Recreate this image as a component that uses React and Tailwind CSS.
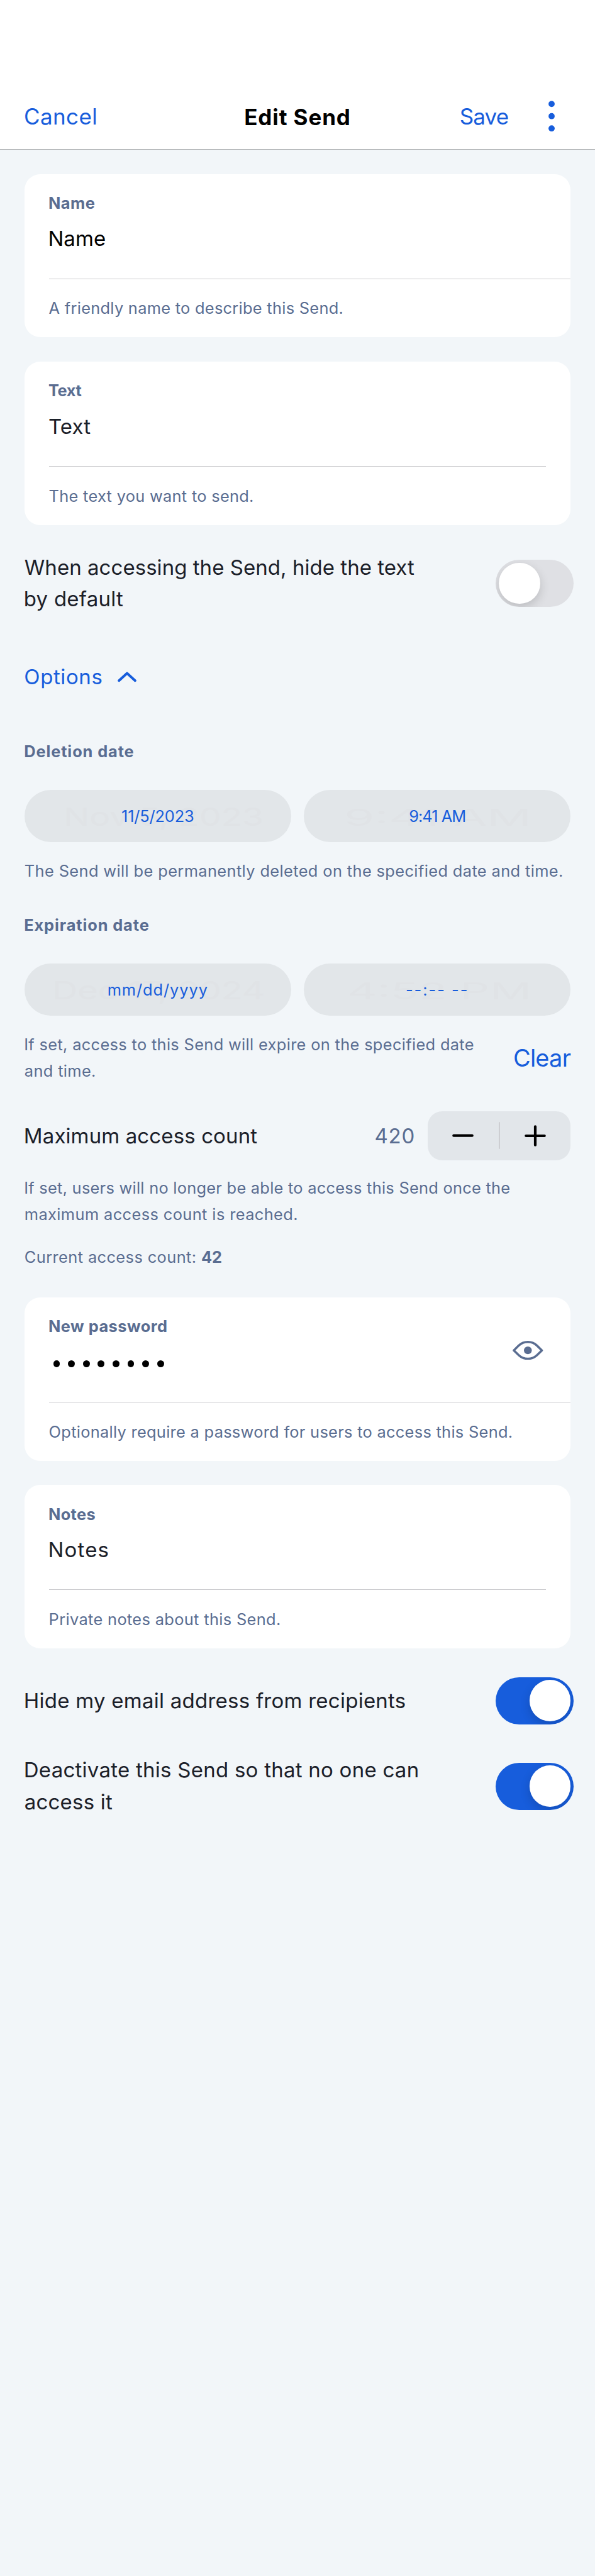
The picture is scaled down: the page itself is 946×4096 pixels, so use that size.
import React from "react";

const LABEL = "block whitespace-nowrap font-bold text-[25.4px] leading-[32px] text-[#5a6d91]";
const HELP = "block whitespace-nowrap text-[25.4px] text-[#5a6d91]";
const BODY = "block whitespace-nowrap text-[33px] text-[#1b2029]";

function Card({ label, labelClass, children, help, helpClass, inset, icon }) {
  return (
    <section className="flex h-[259.6px] w-[868.4px] flex-col rounded-[25px] bg-white pl-[38.8px] pt-[30.2px]">
      <div className="flex h-[135.8px] items-start justify-between pr-[43.5px]">
        <div className="-ml-[0.6px]">
          <span className={`${LABEL} ${labelClass}`}>{label}</span>
          <div className="mt-[18.4px] h-[44px]">{children}</div>
        </div>
        {icon}
      </div>
      <div className={`h-px shrink-0 bg-[#c9c9cc] ${inset ? "mr-[38.8px]" : ""}`} />
      <span className={`mt-[30.4px] leading-[32px] ${HELP} ${helpClass}`}>{help}</span>
    </section>
  );
}

function Toggle({ on }) {
  return (
    <div
      className={`-mr-[4.8px] flex h-[75px] w-[123.7px] shrink-0 items-center overflow-hidden rounded-full px-[4.9px] ${
        on ? "justify-end bg-[#175ddc]" : "justify-start bg-[#dfe0e4]"
      }`}
    >
      <div className="size-[65.4px] rounded-full bg-white shadow-[0_6px_16px_rgba(0,0,0,0.16)]" />
    </div>
  );
}

function Pill({ text, textClass, ghost, x, width, size }) {
  return (
    <div className="relative flex h-[83.2px] w-[424px] items-center justify-center rounded-[41.6px] bg-[#e2e6e9]">
      <svg className="absolute inset-0" width="424" height="83" aria-hidden="true">
        <text
          x={x}
          y="56.5"
          textLength={width}
          lengthAdjust="spacingAndGlyphs"
          fontSize={size}
          fill="#e0e3e6"
        >
          {ghost}
        </text>
      </svg>
      <span className={`relative whitespace-nowrap text-[25.4px] leading-[32px] text-[#175ddc] ${textClass}`}>
        {text}
      </span>
    </div>
  );
}

const Eye = () => (
  <svg className="mt-[38.3px] shrink-0" width="48.5" height="30.3" viewBox="0 0 60 37.5" fill="none">
    <path
      d="M2.4 18.75 L12 9.4 C17.5 4.2 23.5 2.2 30 2.2 C36.5 2.2 42.5 4.2 48 9.4 L57.6 18.75 L48 28.1 C42.5 33.3 36.5 35.3 30 35.3 C23.5 35.3 17.5 33.3 12 28.1 Z"
      stroke="#5a6d91"
      strokeWidth="4.4"
      strokeLinejoin="round"
    />
    <circle cx="30" cy="18.75" r="7.7" fill="#5a6d91" />
  </svg>
);

export default function App() {
  return (
    <div className="flex min-h-[4096px] w-[946px] flex-col bg-[#f2f6f9] font-['Inter',sans-serif]">
      <header className="grid h-[238px] grid-cols-[1fr_auto_1fr] items-start border-b border-[#a9acae] bg-white pt-[162.6px] text-[35px] leading-[44px]">
        <span className="pl-[38px] tracking-[0.4px] text-[#175ddc]">Cancel</span>
        <span className="mt-[1.6px] font-bold tracking-[0.9px] text-black">Edit Send</span>
        <div className="flex justify-end gap-[64px] pr-[63.7px] text-[#175ddc]">
          <span className="tracking-[-0.83px]">Save</span>
          <svg className="-mt-[3px]" width="10" height="50" viewBox="0 0 10 50" fill="#175ddc">
            <circle cx="5" cy="5.3" r="4.9" />
            <circle cx="5" cy="24.7" r="4.9" />
            <circle cx="5" cy="44.2" r="4.9" />
          </svg>
        </div>
      </header>

      <main className="flex flex-col px-[38.8px] pt-[38.6px]">
        <Card
          label="Name"
          labelClass="tracking-[0.49px]"
          help="A friendly name to describe this Send."
          helpClass="tracking-[0.28px]"
        >
          <span className="-ml-[0.6px] block text-[33px] leading-[44px] tracking-[0.09px] text-black">Name</span>
        </Card>

        <div className="mt-[39px]">
          <Card
            label="Text"
            labelClass="tracking-[-0.38px]"
            help="The text you want to send."
            helpClass="tracking-[0.29px]"
            inset
          >
            <span className={`${BODY} leading-[44px] tracking-[0.15px]`}>Text</span>
          </Card>
        </div>

        <div className="mt-[42px] flex items-center justify-between">
          <div className={`${BODY} leading-[50.6px]`}>
            <span className="block tracking-[0.04px]">When accessing the Send, hide the text</span>
            <span className="-ml-[1px] block tracking-[0.23px]">by default</span>
          </div>
          <Toggle />
        </div>

        <div className="mt-[73.2px] flex h-[50px] items-center">
          <span className="-ml-[0.5px] text-[33px] leading-[50px] tracking-[0.6px] text-[#175ddc]">Options</span>
          <svg className="ml-[24px]" width="30" height="17" viewBox="0 0 30 17" fill="none">
            <path d="M2.2 14.2 L15 2.6 L27.8 14.2" stroke="#175ddc" strokeWidth="4" strokeLinecap="round" strokeLinejoin="round" />
          </svg>
        </div>

        <span className={`mt-[78.1px] -ml-[0.6px] ${LABEL} tracking-[0.88px]`}>Deletion date</span>
        <div className="mt-[45px] flex justify-between">
          <Pill text="11/5/2023" textClass="tracking-[-0.18px]" ghost="Nov 5, 2023" x={62} width={318} size={40} />
          <Pill text="9:41 AM" textClass="tracking-[-0.98px]" ghost="9:41 AM" x={64} width={298} size={37} />
        </div>
        <span className={`mt-[30px] leading-[32px] ${HELP} tracking-[0.38px]`}>
          The Send will be permanently deleted on the specified date and time.
        </span>

        <span className={`mt-[53.7px] -ml-[0.6px] ${LABEL} tracking-[0.88px]`}>Expiration date</span>
        <div className="mt-[45px] flex justify-between">
          <Pill text="mm/dd/yyyy" textClass="tracking-[0.93px]" ghost="Dec 17, 2024" x={44} width={338} size={40} />
          <Pill text="--:-- --" textClass="tracking-[2px]" ghost="4:52 PM" x={69} width={293} size={37} />
        </div>
        <div className="mt-[24.8px] flex items-center justify-between">
          <div className={`${HELP} leading-[42.2px]`}>
            <span className="-ml-[0.6px] block tracking-[0.33px]">
              If set, access to this Send will expire on the specified date
            </span>
            <span className="block tracking-[0.35px]">and time.</span>
          </div>
          <span className="text-[37.9px] leading-[50px] tracking-[-0.72px] text-[#175ddc]">Clear</span>
        </div>

        <div className="mt-[42.4px] flex h-[77.6px] items-center">
          <span className={`-ml-[1px] ${BODY} leading-[50px] tracking-[0.12px]`}>Maximum access count</span>
          <span className="ml-auto mr-[20px] text-[33px] leading-[50px] tracking-[0.73px] text-[#5a6d91]">420</span>
          <div className="flex h-[77.6px] w-[227.2px] items-center rounded-[23px] bg-[#e2e6ea]">
            <div className="flex w-[112.6px] justify-center">
              <svg width="34" height="34" viewBox="0 0 34 34" stroke="black" strokeWidth="4.2" strokeLinecap="round">
                <path d="M2.3 16.7 H31.7" />
              </svg>
            </div>
            <div className="h-[43.5px] w-[2px] rounded-full bg-[#cdced2]" />
            <div className="flex w-[112.6px] justify-center">
              <svg width="34" height="34" viewBox="0 0 34 34" stroke="black" strokeWidth="4.2" strokeLinecap="round">
                <path d="M2.3 17 H31.7 M17 2.3 V31.7" />
              </svg>
            </div>
          </div>
        </div>
        <div className={`mt-[23.2px] ${HELP} leading-[42.2px]`}>
          <span className="-ml-[0.6px] block tracking-[0.26px]">
            If set, users will no longer be able to access this Send once the
          </span>
          <span className="block tracking-[0.39px]">maximum access count is reached.</span>
        </div>
        <span className={`mt-[31.4px] leading-[32px] ${HELP} tracking-[0.4px]`}>
          Current access count: <b className="tracking-[-0.21px]">42</b>
        </span>

        <div className="mt-[47.7px]">
          <Card
            label="New password"
            labelClass="tracking-[0.48px]"
            help="Optionally require a password for users to access this Send."
            helpClass="tracking-[0.29px]"
            icon={<Eye />}
          >
            <div className="flex gap-[12.8px] pl-[7.6px] pt-[19.4px]">
              {Array.from({ length: 8 }, (_, i) => (
                <i key={i} className="size-[10.8px] rounded-full bg-black" />
              ))}
            </div>
          </Card>
        </div>

        <div className="mt-[38.6px]">
          <Card
            label="Notes"
            labelClass="tracking-[0.32px]"
            help="Private notes about this Send."
            helpClass="tracking-[0.34px]"
            inset
          >
            <span className={`-ml-[0.6px] ${BODY} leading-[44px] tracking-[1.2px]`}>Notes</span>
          </Card>
        </div>

        <div className="mt-[45.6px] flex items-center justify-between">
          <span className={`-ml-[1px] ${BODY} leading-[50px] tracking-[0.25px]`}>
            Hide my email address from recipients
          </span>
          <Toggle on />
        </div>

        <div className="mt-[47.7px] flex items-center justify-between">
          <div className={`${BODY} leading-[50.8px]`}>
            <span className="-ml-[1px] block tracking-[0.25px]">Deactivate this Send so that no one can</span>
            <span className="block tracking-[0.19px]">access it</span>
          </div>
          <Toggle on />
        </div>
      </main>
    </div>
  );
}
